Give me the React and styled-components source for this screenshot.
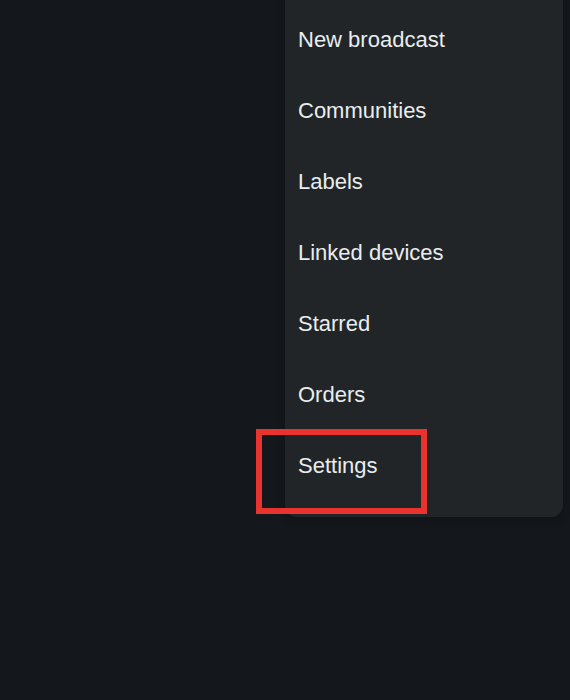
import React from "react";
import styled, { createGlobalStyle } from "styled-components";

const GlobalStyle = createGlobalStyle`
  html, body {
    margin: 0;
    padding: 0;
    background: #14181c;
    overflow: hidden;
  }
`;

const Screen = styled.div`
  width: 570px;
  height: 700px;
  background: #14181c;
  display: flex;
  justify-content: flex-end;
  align-items: flex-start;
  font-family: "Liberation Sans", Arial, sans-serif;
`;

const Menu = styled.ul`
  list-style: none;
  margin: -12px 7px 0 0;
  padding: 16px 0;
  width: 278px;
  background: #212528;
  border-radius: 0 0 12px 12px;
  box-shadow: 0 2px 8px rgba(0, 0, 0, 0.25);
`;

const Item = styled.li`
  position: relative;
  height: 71px;
  display: flex;
  align-items: center;
  padding-left: 13px;
  font-size: 22px;
  color: #e9edef;
`;

const Highlight = styled.div`
  position: absolute;
  left: -29px;
  top: -1px;
  width: 159px;
  height: 73px;
  border: 6px solid #e8332f;
  pointer-events: none;
`;

const items = [
  "New broadcast",
  "Communities",
  "Labels",
  "Linked devices",
  "Starred",
  "Orders",
  "Settings",
];

const App = () => {
  return (
    <>
      <GlobalStyle />
      <Screen>
        <Menu>
          {items.map((label) => (
            <Item key={label}>
              {label}
              {label === "Settings" && <Highlight />}
            </Item>
          ))}
        </Menu>
      </Screen>
    </>
  );
};

export default App;
